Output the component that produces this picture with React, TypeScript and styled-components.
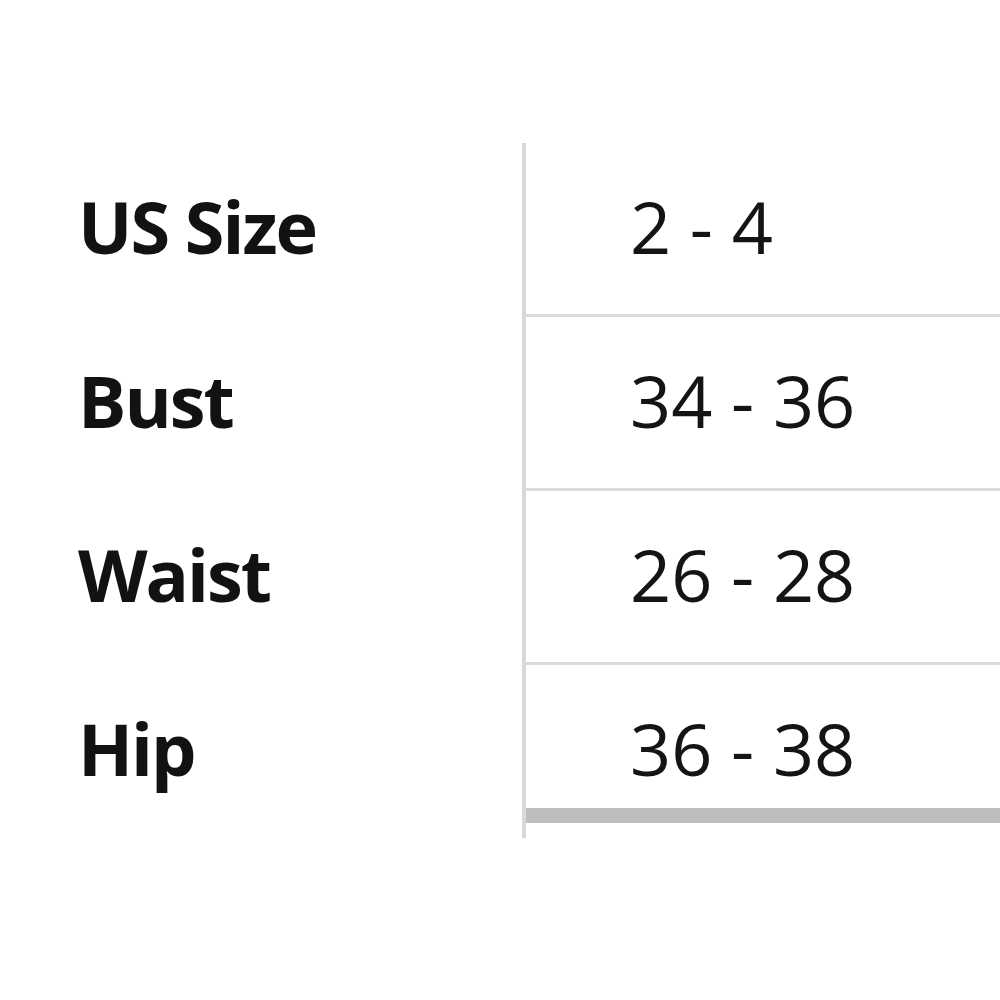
import React from "react";
import styled, { createGlobalStyle } from "styled-components";

const Global = createGlobalStyle`
  html, body { margin: 0; padding: 0; background: #ffffff; }
  body { font-family: "Open Sans", "Noto Sans", sans-serif; color: #141414; }
`;

const Page = styled.div`
  width: 1000px;
  height: 1000px;
  padding-top: 143px;
  box-sizing: border-box;
  overflow: hidden;
`;

const Table = styled.div`
  display: flex;
  flex-direction: column;
`;

const Row = styled.div<{ $h: number }>`
  display: flex;
  height: ${(p) => p.$h}px;
`;

const Label = styled.div`
  width: 522px;
  box-sizing: border-box;
  padding: 47px 0 0 78px;
  font-size: 72px;
  line-height: 72px;
  font-weight: 700;
  letter-spacing: -2px;
  color: #121212;
`;

const Value = styled.div<{ $border?: boolean }>`
  flex: 1;
  box-sizing: border-box;
  border-left: 4px solid #d8d8d8;
  border-bottom: ${(p) => (p.$border ? "3px solid #dadada" : "none")};
  padding: 47px 0 0 104px;
  font-size: 72px;
  line-height: 72px;
  font-weight: 400;
  color: #141414;
`;

const Spacer = styled.div`
  width: 522px;
`;

const Bar = styled.div`
  flex: 1;
  border-left: 4px solid #d8d8d8;
  background: #bdbdbd;
`;

const Tail = styled.div`
  flex: 1;
  border-left: 4px solid #d8d8d8;
`;

const rows = [
  { label: "US Size", value: "2 - 4", h: 174, border: true },
  { label: "Bust", value: "34 - 36", h: 174, border: true },
  { label: "Waist", value: "26 - 28", h: 174, border: true },
  { label: "Hip", value: "36 - 38", h: 143, border: false },
];

export default function App() {
  return (
    <>
      <Global />
      <Page>
        <Table>
          {rows.map((r) => (
            <Row key={r.label} $h={r.h}>
              <Label>{r.label}</Label>
              <Value $border={r.border}>{r.value}</Value>
            </Row>
          ))}
          <Row $h={15}>
            <Spacer />
            <Bar />
          </Row>
          <Row $h={15}>
            <Spacer />
            <Tail />
          </Row>
        </Table>
      </Page>
    </>
  );
}
